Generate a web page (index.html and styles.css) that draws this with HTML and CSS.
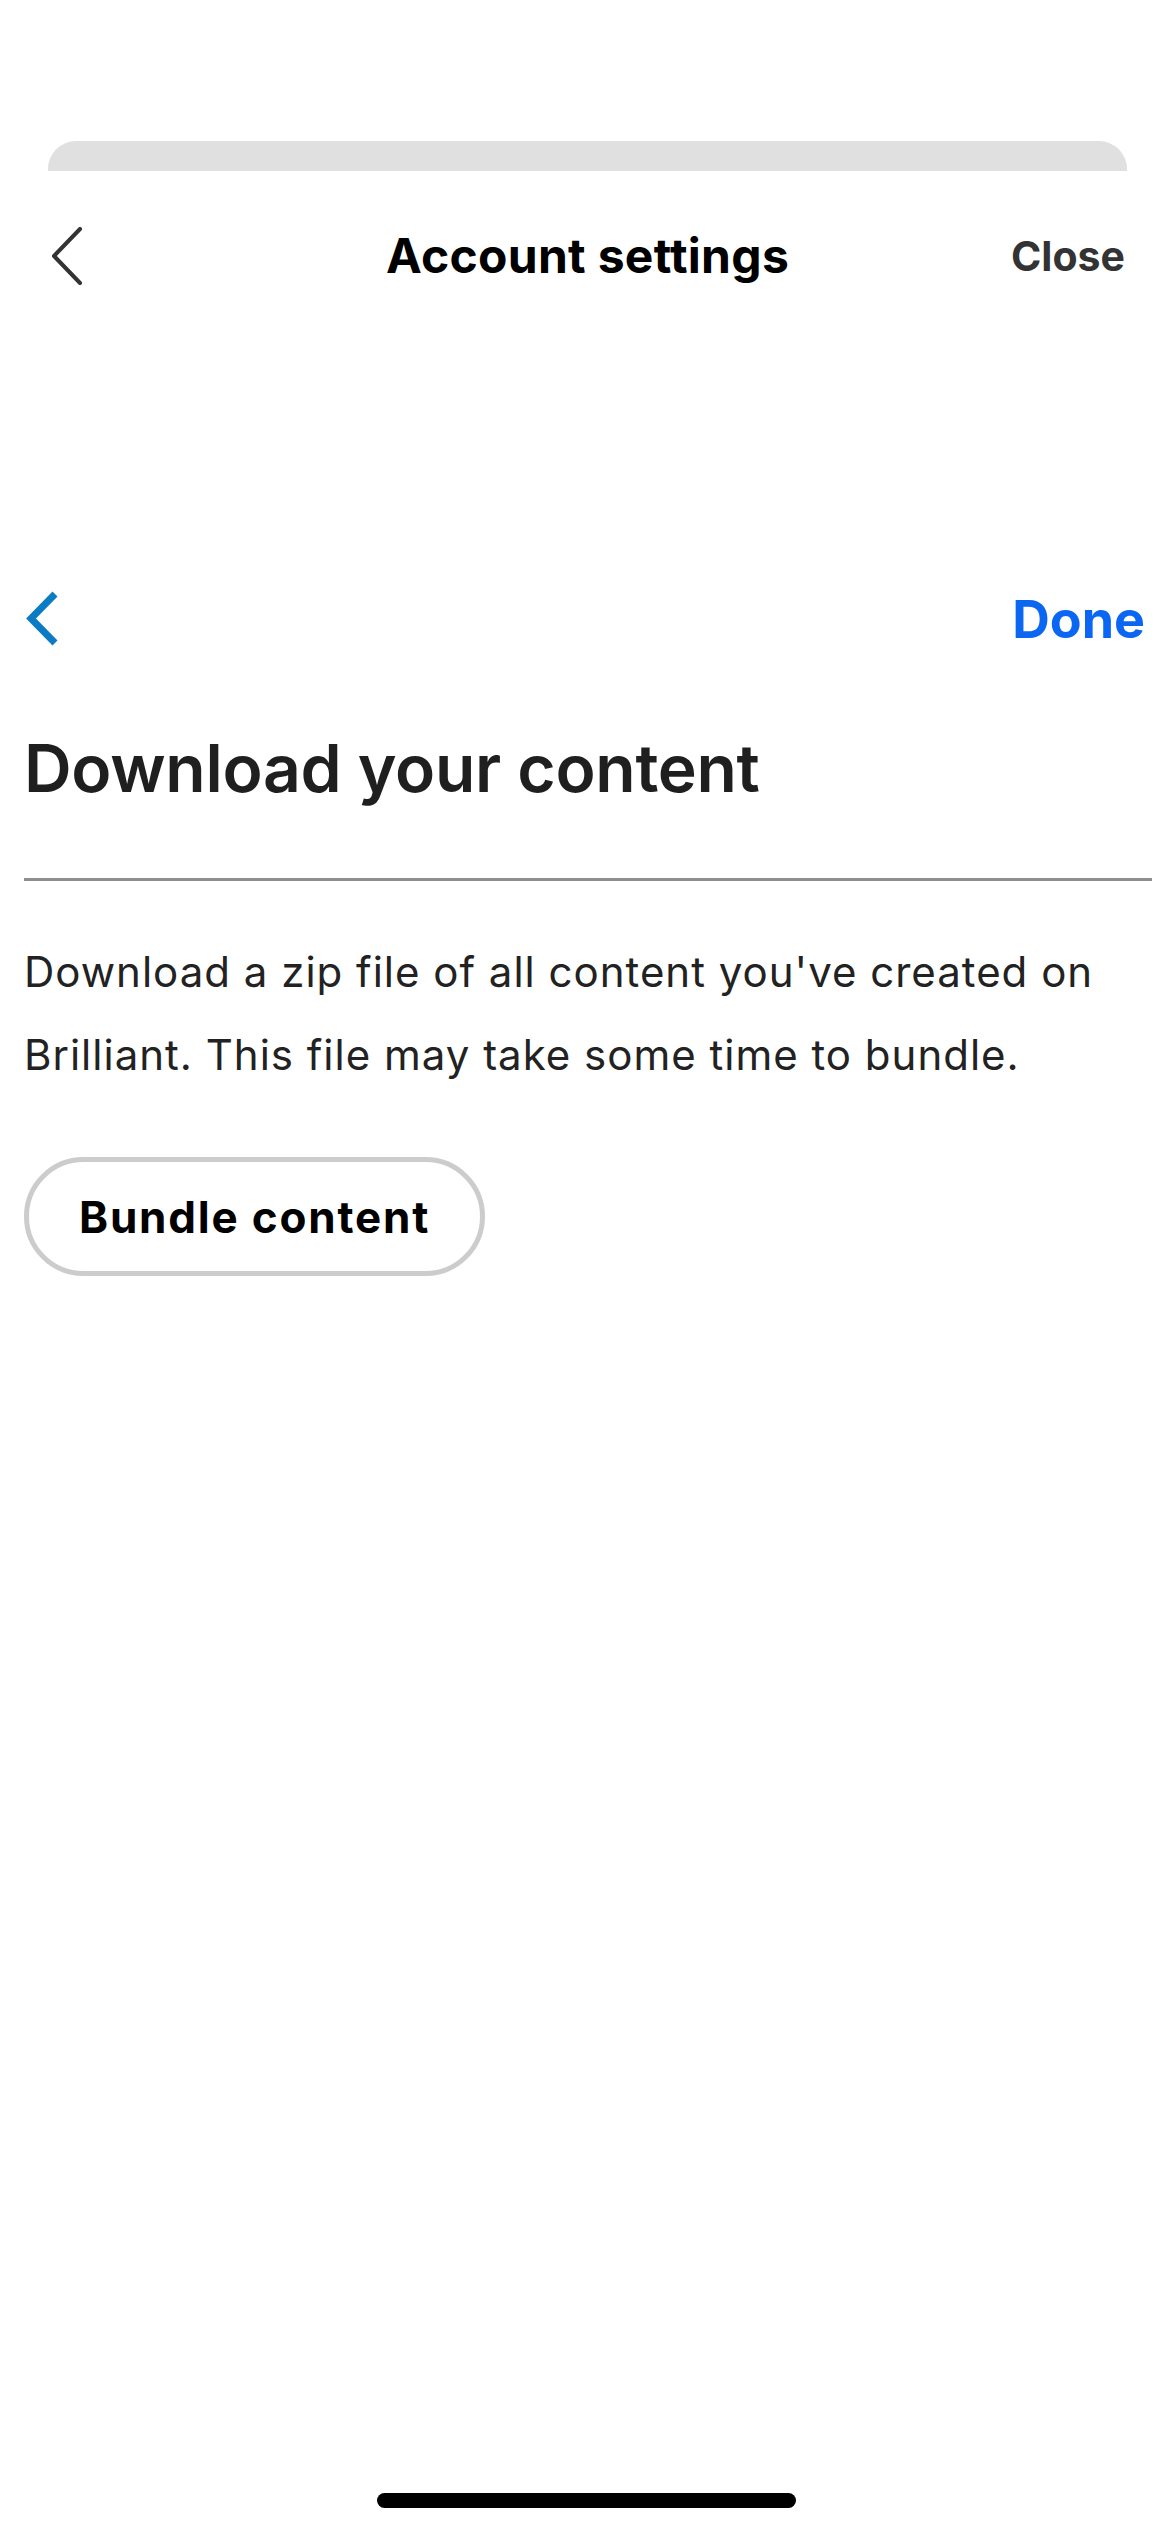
FILE: index.html
```html
<!DOCTYPE html>
<html lang="en">
    <head>
        <meta charset="UTF-8" />
        <meta name="viewport" content="width=device-width, initial-scale=1.0" />
        <title>Download your content</title>
        <link rel="stylesheet" href="styles.css">
    </head>
    <body>
        <div class="sheet-handle"></div>

        <div class="header">
            <svg class="back-icon" width="34" height="58" viewBox="0 0 34 58">
                <polyline points="30,2 4,29 30,56" fill="none" stroke="#333" stroke-width="4" stroke-linecap="round" stroke-linejoin="round" />
            </svg>
            <h1 class="header-title">Account settings</h1>
            <span class="header-close">Close</span>
        </div>

        <div class="inner-nav">
            <svg class="inner-back" width="60" height="64" viewBox="0 0 60 64">
                <polyline points="55,6 31,30.5 55,55" fill="none" stroke="#0b7cc4" stroke-width="7" />
            </svg>
            <span class="done">Done</span>
        </div>

        <div class="content">
            <h2 class="page-title">Download your content</h2>
            <hr class="divider" />
            <p class="description">
                Download a zip file of all content you've created on
                Brilliant. This file may take some time to bundle.
            </p>
            <button type="button" class="bundle-button">Bundle content</button>
        </div>

        <div class="home-indicator"></div>
    </body>
</html>
```

FILE: styles.css
```css
html {
    font-family: Inter, Roboto, "Liberation Sans", Arial, sans-serif;
}

body {
    margin: 0;
    background: #fff;
    width: 1170px;
    min-height: 2532px;
}

.sheet-handle {
    margin: 141px 43px 0 48px;
    height: 30px;
    background: #e0e0e0;
    border-radius: 28px 28px 0 0;
}

.header {
    display: grid;
    grid-template-columns: 1fr auto 1fr;
    align-items: center;
    margin-top: 55px;
    padding: 0 45px 0 50px;
    height: 60px;
}

.header-title {
    margin: 0;
    font-size: 48px;
    line-height: 60px;
    font-weight: 700;
    letter-spacing: 0.3px;
    color: #000;
}

.header-close {
    justify-self: end;
    font-size: 41px;
    line-height: 60px;
    font-weight: 700;
    color: #333;
}

.inner-nav {
    display: flex;
    align-items: center;
    justify-content: space-between;
    margin-top: 302px;
    padding: 0 25px 0 0;
    height: 64px;
}

.done {
    font-size: 52px;
    line-height: 64px;
    font-weight: 700;
    color: #0b66f2;
}

.content {
    padding: 0 18px 0 24px;
}

.page-title {
    margin: 76px 0 0;
    font-size: 66px;
    line-height: 80px;
    font-weight: 600;
    letter-spacing: -0.3px;
    color: #1f1f1f;
}

.divider {
    margin: 70px 0 0;
    border: none;
    height: 3px;
    background: #8e8e8e;
}

.description {
    margin: 49px 0 0;
    font-size: 42px;
    line-height: 83px;
    letter-spacing: 1px;
    color: #222;
}

.bundle-button {
    display: inline-flex;
    align-items: center;
    box-sizing: border-box;
    margin-top: 61px;
    height: 119px;
    padding: 0 50px;
    border: 5px solid #ccc;
    border-radius: 60px;
    background: #fff;
    font-family: inherit;
    font-size: 44px;
    font-weight: 700;
    letter-spacing: 1.8px;
    color: #000;
}

.home-indicator {
    position: fixed;
    bottom: 24px;
    left: 377px;
    width: 419px;
    height: 15px;
    border-radius: 8px;
    background: #000;
}
```
